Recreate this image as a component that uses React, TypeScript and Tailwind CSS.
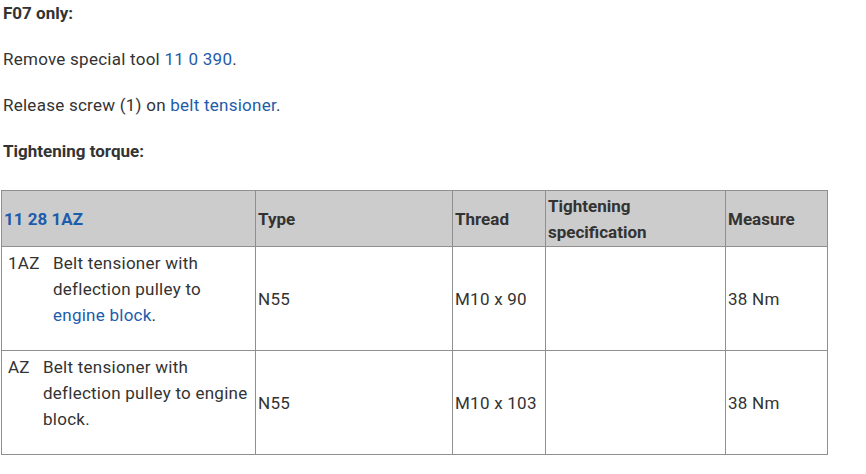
import React from "react";

const link = "text-[#1d5cab]";
const bd = "border border-[#8f8f8f]";

export default function App() {
  return (
    <div
      className="bg-white w-[866px] h-[474px] overflow-hidden text-[#333333] text-[17px] leading-[26px] pl-[1px] tracking-[0.25px]"
      style={{ fontFamily: "Roboto, 'Liberation Sans', sans-serif" }}
    >
      <div className="flex flex-col gap-[20px] pl-[2px]">
        <p className="font-bold tracking-normal">F07 only:</p>
        <p>
          Remove special tool <span className={link}>11 0 390</span>.
        </p>
        <p>
          Release screw (1) on <span className={link}>belt tensioner</span>.
        </p>
        <p className="font-bold tracking-normal">Tightening torque:</p>
      </div>
      <table className={`mt-[26px] border-collapse ${bd} w-[827px] table-fixed`}>
        <colgroup>
          <col className="w-[254px]" />
          <col className="w-[197px]" />
          <col className="w-[93px]" />
          <col className="w-[180px]" />
          <col className="w-[102px]" />
        </colgroup>
        <thead>
          <tr className="bg-[#cccccc] text-left tracking-normal">
            <th className={`${bd} px-[2px] pt-[2px] pb-[1px] align-middle font-bold ${link}`}>11 28 1AZ</th>
            <th className={`${bd} px-[2px] pt-[2px] pb-[1px] align-middle font-bold`}>Type</th>
            <th className={`${bd} px-[2px] pt-[2px] pb-[1px] align-middle font-bold`}>Thread</th>
            <th className={`${bd} px-[2px] pt-[2px] pb-[1px] align-middle font-bold`}>Tightening specification</th>
            <th className={`${bd} px-[2px] pt-[2px] pb-[1px] align-middle font-bold`}>Measure</th>
          </tr>
        </thead>
        <tbody>
          <tr>
            <td className={`${bd} px-[2px] pt-[3px] pb-[22px] align-top`}>
              <div className="flex pl-[4px]">
                <span className="w-[45px] shrink-0">1AZ</span>
                <span>
                  Belt tensioner with deflection pulley to <span className={link}>engine block</span>.
                </span>
              </div>
            </td>
            <td className={`${bd} px-[2px] align-middle`}>N55</td>
            <td className={`${bd} px-[2px] align-middle`}>M10 x 90</td>
            <td className={`${bd} px-[2px] align-middle`}></td>
            <td className={`${bd} px-[2px] align-middle`}>38 Nm</td>
          </tr>
          <tr>
            <td className={`${bd} px-[2px] pt-[3px] pb-[22px] align-top`}>
              <div className="flex pl-[4px]">
                <span className="w-[35px] shrink-0">AZ</span>
                <span>Belt tensioner with deflection pulley to engine block.</span>
              </div>
            </td>
            <td className={`${bd} px-[2px] align-middle`}>N55</td>
            <td className={`${bd} px-[2px] align-middle`}>M10 x 103</td>
            <td className={`${bd} px-[2px] align-middle`}></td>
            <td className={`${bd} px-[2px] align-middle`}>38 Nm</td>
          </tr>
        </tbody>
      </table>
    </div>
  );
}
